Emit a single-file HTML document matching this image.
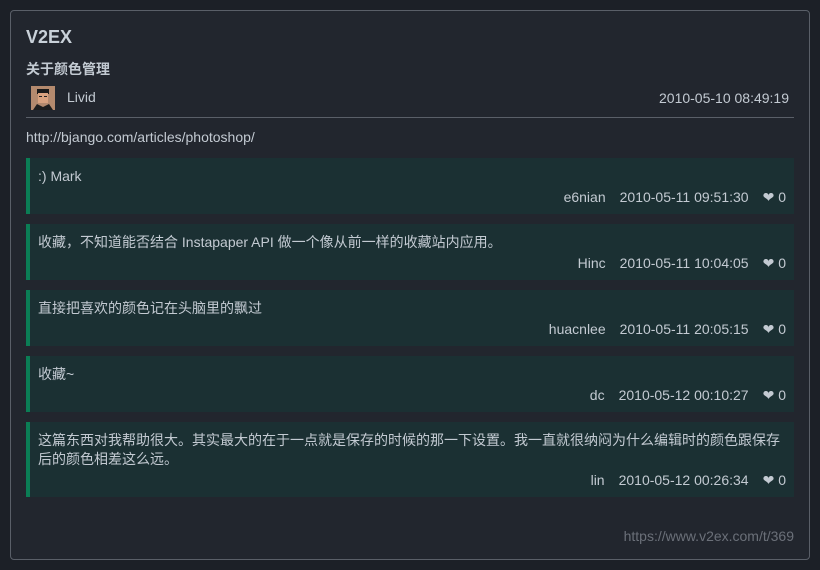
<!DOCTYPE html>
<html><head><meta charset="utf-8"><style>
*{margin:0;padding:0;box-sizing:border-box}
body{width:820px;height:570px;background:#1c2027;font-family:"Liberation Sans","Noto Sans CJK SC",sans-serif;color:#c3cad2;font-size:14px;position:relative;overflow:hidden}
.card{position:absolute;left:10px;top:10px;width:800px;height:550px;border:1px solid #5a5f68;border-radius:4px;background:#22262e}
.abs{position:absolute;white-space:nowrap}
.r{position:absolute;left:26px;width:768px;background:#1b3033;border-left:4px solid #0b7d55}
.r .t{position:absolute;left:8px;top:9px;line-height:19px;width:752px;white-space:normal}
.r .m{position:absolute;right:8px;bottom:8px;white-space:nowrap}
.m span{margin-left:14px}
</style></head><body>
<div class="card"></div>
<div class="abs" style="left:26px;top:27px;font-size:18px;font-weight:bold;color:#c9d1d9">V2EX</div>
<div class="abs" style="left:26px;top:59px;font-size:14px;font-weight:bold">关于颜色管理</div>
<svg class="abs" style="left:31px;top:86px" width="24" height="24" viewBox="0 0 24 24"><rect width="24" height="24" fill="#b48a6e"/><rect x="6" y="3" width="12" height="5" fill="#1a1a1a"/><rect x="7" y="7" width="10" height="10" fill="#d9a27f"/><rect x="8" y="10" width="3" height="1" fill="#222"/><rect x="13" y="10" width="3" height="1" fill="#222"/><path d="M2 24 L6 18 L12 21 L18 18 L22 24Z" fill="#1e1e1e"/></svg>
<div class="abs" style="left:67px;top:89px">Livid</div>
<div class="abs" style="right:31px;top:90px">2010-05-10 08:49:19</div>
<div class="abs" style="left:26px;top:117px;width:768px;height:1px;background:#5a5f68"></div>
<div class="abs" style="left:26px;top:129px">http://bjango.com/articles/photoshop/</div>

<div class="r" style="top:158px;height:56px"><div class="t">:) Mark</div><div class="m">e6nian<span>2010-05-11 09:51:30</span><span>❤ 0</span></div></div>
<div class="r" style="top:224px;height:56px"><div class="t">收藏，不知道能否结合 Instapaper API 做一个像从前一样的收藏站内应用。</div><div class="m">Hinc<span>2010-05-11 10:04:05</span><span>❤ 0</span></div></div>
<div class="r" style="top:290px;height:56px"><div class="t">直接把喜欢的颜色记在头脑里的飘过</div><div class="m">huacnlee<span>2010-05-11 20:05:15</span><span>❤ 0</span></div></div>
<div class="r" style="top:356px;height:56px"><div class="t">收藏~</div><div class="m">dc<span>2010-05-12 00:10:27</span><span>❤ 0</span></div></div>
<div class="r" style="top:422px;height:75px"><div class="t">这篇东西对我帮助很大。其实最大的在于一点就是保存的时候的那一下设置。我一直就很纳闷为什么编辑时的颜色跟保存后的颜色相差这么远。</div><div class="m">lin<span>2010-05-12 00:26:34</span><span>❤ 0</span></div></div>

<div class="abs" style="right:26px;top:528px;color:#6b7079">https://www.v2ex.com/t/369</div>
</body></html>
